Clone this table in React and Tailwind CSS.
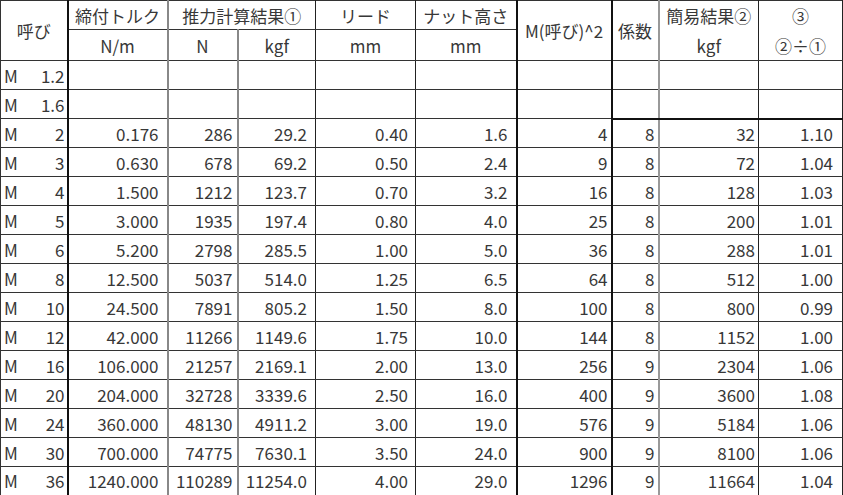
import React from 'react';

// column right-borders + padding, left to right
const COLS = [
  { w: 'w-[67px]', r: 'border-r-2 border-r-[#111]', pr: 'pr-[2px]' },
  { w: 'w-[100px]', r: 'border-r-2 border-r-[#888]', pr: 'pr-[8px]' },
  { w: 'w-[70px]', r: 'border-r-2 border-r-[#888]', pr: 'pr-[4px]' },
  { w: 'w-[78px]', r: 'border-r border-r-[#222]', pr: 'pr-[8px]' },
  { w: 'w-[100px]', r: 'border-r border-r-[#222]', pr: 'pr-[7px]' },
  { w: 'w-[101px]', r: 'border-r-2 border-r-[#111]', pr: 'pr-[8px]' },
  { w: 'w-[95px]', r: 'border-r-2 border-r-[#111]', pr: 'pr-[3px]' },
  { w: 'w-[47px]', r: 'border-r-2 border-r-[#999]', pr: 'pr-[3px]' },
  { w: 'w-[100px]', r: 'border-r border-r-[#222]', pr: 'pr-[3px]' },
  { w: 'w-[84px]', r: 'border-r border-r-[#222]', pr: 'pr-[9px]' },
];

const ROWS = [
  ['1.2'],
  ['1.6'],
  ['2', '0.176', '286', '29.2', '0.40', '1.6', '4', '8', '32', '1.10'],
  ['3', '0.630', '678', '69.2', '0.50', '2.4', '9', '8', '72', '1.04'],
  ['4', '1.500', '1212', '123.7', '0.70', '3.2', '16', '8', '128', '1.03'],
  ['5', '3.000', '1935', '197.4', '0.80', '4.0', '25', '8', '200', '1.01'],
  ['6', '5.200', '2798', '285.5', '1.00', '5.0', '36', '8', '288', '1.01'],
  ['8', '12.500', '5037', '514.0', '1.25', '6.5', '64', '8', '512', '1.00'],
  ['10', '24.500', '7891', '805.2', '1.50', '8.0', '100', '8', '800', '0.99'],
  ['12', '42.000', '11266', '1149.6', '1.75', '10.0', '144', '8', '1152', '1.00'],
  ['16', '106.000', '21257', '2169.1', '2.00', '13.0', '256', '9', '2304', '1.06'],
  ['20', '204.000', '32728', '3339.6', '2.50', '16.0', '400', '9', '3600', '1.08'],
  ['24', '360.000', '48130', '4911.2', '3.00', '19.0', '576', '9', '5184', '1.06'],
  ['30', '700.000', '74775', '7630.1', '3.50', '24.0', '900', '9', '8100', '1.06'],
  ['36', '1240.000', '110289', '11254.0', '4.00', '29.0', '1296', '9', '11664', '1.04'],
];

const cell = 'border-y border-y-[#333] p-0 font-normal align-middle';

// header cell spanning both header rows, with one or two lines
function TallHead({ col, top, bottom }) {
  return (
    <th rowSpan={2} className={`${cell} ${COLS[col].r} text-center`}>
      {bottom ? (
        <div className="flex flex-col">
          <span className="h-[29px] flex items-center justify-center">{top}</span>
          <span className="h-[30px] flex items-center justify-center">{bottom}</span>
        </div>
      ) : (
        <div className="h-[59px] flex items-center justify-center">{top}</div>
      )}
    </th>
  );
}

export default function App() {
  return (
    <div className="bg-white w-[843px] h-[495px] overflow-hidden text-[#383838] text-[17px] leading-none font-['Noto_Sans_CJK_JP',sans-serif]">
      <table className="table-fixed border-collapse w-[842px] border-l border-l-[#333] border-b-2 border-b-[#111]">
        <colgroup>
          {COLS.map((c, i) => (
            <col key={i} className={c.w} />
          ))}
        </colgroup>
        <thead>
          <tr className="h-[29px]">
            <TallHead col={0} top="呼び" />
            <th className={`${cell} ${COLS[1].r} text-center`}>締付トルク</th>
            <th colSpan={2} className={`${cell} ${COLS[3].r} text-center`}>推力計算結果①</th>
            <th className={`${cell} ${COLS[4].r} text-center`}>リード</th>
            <th className={`${cell} ${COLS[5].r} text-center`}>ナット高さ</th>
            <TallHead col={6} top="M(呼び)^2" />
            <TallHead col={7} top="係数" />
            <TallHead col={8} top="簡易結果②" bottom="kgf" />
            <TallHead col={9} top="③" bottom="②÷①" />
          </tr>
          <tr className="h-[30px]">
            <th className={`${cell} ${COLS[1].r} text-center`}>N/m</th>
            <th className={`${cell} ${COLS[2].r} text-center`}>N</th>
            <th className={`${cell} ${COLS[3].r} text-center`}>kgf</th>
            <th className={`${cell} ${COLS[4].r} text-center`}>mm</th>
            <th className={`${cell} ${COLS[5].r} text-center`}>mm</th>
          </tr>
        </thead>
        <tbody>
          {ROWS.map((row, r) => (
            <tr key={row[0]} className="h-[29px]">
              <td className={`${cell} ${COLS[0].r} ${COLS[0].pr} pl-[3px]`}>
                <div className="flex justify-between">
                  <span>M</span>
                  <span>{row[0]}</span>
                </div>
              </td>
              {COLS.slice(1).map((c, i) => (
                <td
                  key={i}
                  className={`${cell} ${c.r} ${c.pr} text-right ${r === 1 && i >= 6 ? 'border-b-2 border-b-[#111]' : ''}`}
                >
                  {row[i + 1] || ''}
                </td>
              ))}
            </tr>
          ))}
        </tbody>
      </table>
    </div>
  );
}
